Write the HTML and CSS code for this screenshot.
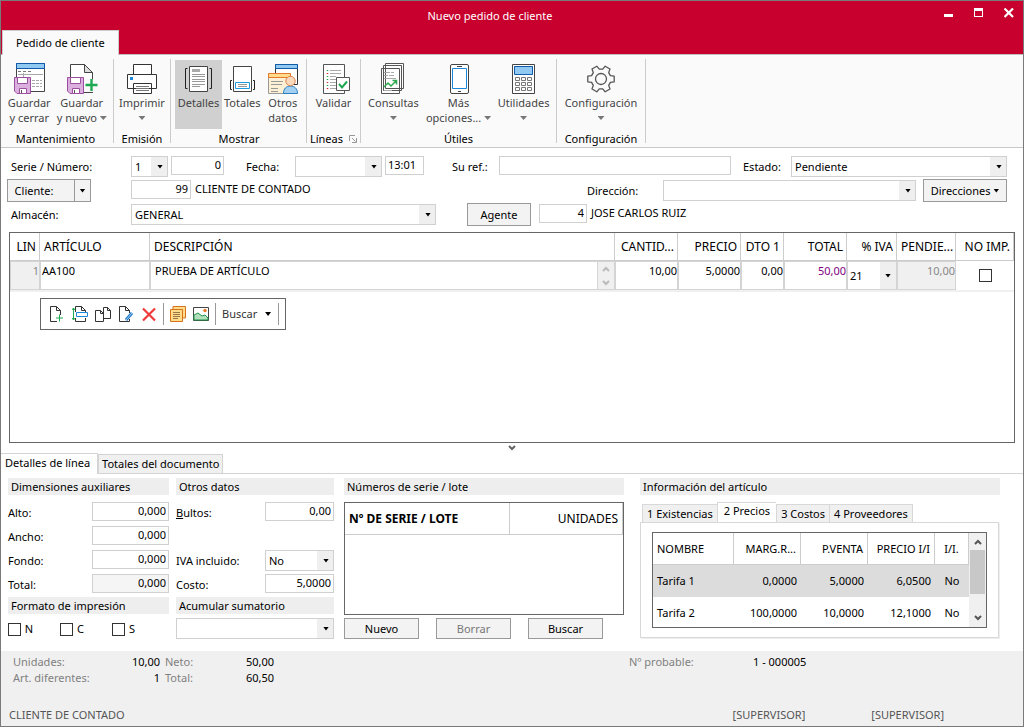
FILE: index.html
```html
<!DOCTYPE html>
<html lang="es">
<head>
<meta charset="utf-8">
<meta name="viewport" content="width=device-width, initial-scale=1">
<title>Nuevo pedido de cliente</title>
<link rel="stylesheet" href="styles.css">
</head>
<body class="window">

<header class="titlebar">
  <div class="title-row">
    <h1 class="title">Nuevo pedido de cliente</h1>
    <div class="window-buttons">
      <button class="win-btn" aria-label="Minimizar"><svg width="10" height="10" viewBox="0 0 10 10"><path d="M0 6h9v3H0z" fill="#fff"/></svg></button>
      <button class="win-btn" aria-label="Maximizar"><svg width="10" height="10" viewBox="0 0 10 10"><path d="M0 0h9v9H0zM1 3v5h7V3z" fill="#fff" fill-rule="evenodd"/></svg></button>
      <button class="win-btn" aria-label="Cerrar"><svg width="10" height="10" viewBox="0 0 10 10"><path d="M.5.500l8.500 8.500M9 .5l-8.500 8.500" stroke="#fff" stroke-width="2.200"/></svg></button>
    </div>
  </div>
  <button class="ribbon-tab">Pedido de cliente</button>
</header>

<nav class="ribbon" aria-label="Cinta de opciones">
  <section class="group g-save">
    <div class="group-buttons">
      <button class="tool">
        <svg class="icon" viewBox="0 0 32 32" fill="none"><path d="M3.500 1.500h28v28h-28z" fill="#fff" stroke="#444"/><path d="M3.500 1.500h28v5h-28z" fill="#91c9f2" stroke="#0f5ba8"/><path d="M5 9.500h3m2 0h3m2 0h3" stroke="#777"/><path d="M5 12.500h25M10.500 11v4M19 18.500h3m1 0h3m1 0h2M19 21.500h3m1 0h3m1 0h2M19 24.500h3m1 0h3m1 0h2" stroke="#a8a8a8"/><path d="M1.500 15.500h16v16H4l-2.500-2.500z" fill="#dcb0de" stroke="#9c4f9f"/><path d="M4.500 15.500h10v6h-10zM6.500 26.500h7v5h-7z" fill="#fff" stroke="#9c4f9f"/><path d="M8.500 28v3" stroke="#555"/></svg>
        <span>Guardar<br>y cerrar</span>
      </button>
      <button class="tool">
        <svg class="icon" viewBox="0 0 32 32" fill="none"><path d="M4.500 30.500v-28h14l8 8v20z" fill="#fff" stroke="#444"/><path d="M18.500 2.500v8h8z" fill="#ddd" stroke="#444"/><path d="M18 17h14v13H18z" fill="#fafafa"/><path d="M18 30.500h9" stroke="#444"/><path d="M25.500 17v12M19.500 23h12" stroke="#1ea851" stroke-width="2.400"/><path d="M1.500 15.500h16v16H4l-2.500-2.500z" fill="#dcb0de" stroke="#9c4f9f"/><path d="M4.500 15.500h10v6h-10zM6.500 26.500h7v5h-7z" fill="#fff" stroke="#9c4f9f"/><path d="M8.500 28v3" stroke="#555"/></svg>
        <span>Guardar<br>y nuevo <i class="caret"></i></span>
      </button>
    </div>
    <h2 class="group-name">Mantenimiento</h2>
  </section>

  <section class="group g-print">
    <div class="group-buttons">
      <button class="tool">
        <svg class="icon" viewBox="0 0 32 32" fill="#fff" stroke="#333"><path d="M7.500 12V2.500h18V12M1.500 12.500h29v14h-29zM7.500 21.500h18v10h-18z"/><path d="M10 24.500h13M10 26.500h13M10 28.500h13" stroke="#777"/><path d="M4 15h3v3H4z" fill="#1e88d8" stroke="none"/></svg>
        <span>Imprimir<br><i class="caret"></i></span>
      </button>
    </div>
    <h2 class="group-name">Emisión</h2>
  </section>

  <section class="group g-show">
    <div class="group-buttons">
      <button class="tool is-active" aria-pressed="true">
        <svg class="icon" viewBox="0 0 32 32" fill="none"><path d="M6.500 4.500h18v25h-18z" fill="#fff" stroke="#444"/><path d="M9 7h8v3H9z" fill="#aaa"/><path d="M9 12.500h13M9 14.500h13M9 17.500h13M9 19.500h13M9 22.500h13M9 24.500h8" stroke="#999"/><path d="M4.500 6.500h-2v20h2M26.500 6.500h2v20h-2" stroke="#222"/></svg>
        <span>Detalles</span>
      </button>
      <button class="tool">
        <svg class="icon" viewBox="0 0 32 32" fill="none"><path d="M7.500 4.500h18v25h-18z" fill="#fff" stroke="#444"/><path d="M9.500 20.500h14v6h-14z" stroke="#1e9be0"/><path d="M12 22.500h9M12 24.500h9" stroke="#999"/><path d="M6 18.500H4.500v9H6M27 18.500h1.500v9H27" stroke="#222"/></svg>
        <span>Totales</span>
      </button>
      <button class="tool">
        <svg class="icon" viewBox="0 0 32 32" fill="none"><path d="M8.500 2.500h22v20h-22z" fill="#fff" stroke="#333"/><path d="M8.500 2.500h22v4h-22z" fill="#91c9f2" stroke="#0f5ba8"/><path d="M1.500 11.500h22v20h-22z" fill="#fdf0d5" stroke="#999"/><path d="M1.500 11.500h22v4h-22z" fill="#ffdc8c" stroke="#e8792b"/><path d="M4 19.500h12M4 22.500h11M4 26.500h7M4 29.500h7" stroke="#999"/><path d="M16.500 31.500c0-5 3-7.500 7-7.500s7 2.500 7 7.500z" fill="#a3cff0" stroke="#2a7fc0"/><circle cx="23.500" cy="19" r="4.700" fill="#fbd9bd" stroke="#d98450"/></svg>
        <span>Otros<br>datos</span>
      </button>
    </div>
    <h2 class="group-name">Mostrar</h2>
  </section>

  <section class="group g-lines">
    <div class="group-buttons">
      <button class="tool">
        <svg class="icon" viewBox="0 0 32 32" fill="none"><path d="M5.500 2.500h21v29h-21z" fill="#fff" stroke="#555"/><path d="M12 8.500h11M12 11.500h11M12 14.500h6M12 17.500h6M12 20.500h6M12 23.500h6M12 26.500h9" stroke="#aaa"/><path d="M9.500 8v1m0 5v1m0 2v1m0 5v1" stroke="#1ea851" stroke-width="1.500"/><path d="M9.500 11v1m0 8v1m0 5v1" stroke="#d22" stroke-width="1.500"/><path d="M18.500 15.500h13v13h-13z" fill="#fff" stroke="#555"/><path d="M21 22l3 3.500 5-6" stroke="#1ea851" stroke-width="2"/></svg>
        <span>Validar</span>
      </button>
    </div>
    <div class="group-foot">
      <h2 class="group-name">Líneas</h2>
      <button class="launcher" aria-label="Opciones de líneas"><svg width="8" height="8" viewBox="0 0 8 8" fill="none" stroke="#999"><path d="M.5 6V.5H6M3 3l3.500 3.500M7.500 3v4.500H3"/></svg></button>
    </div>
  </section>

  <section class="group g-utils">
    <div class="group-buttons">
      <button class="tool">
        <svg class="icon" viewBox="0 0 32 32" fill="#fff" stroke="#555"><path d="M8.500 1.500h18v25h-18zM6.500 3.500h18v25h-18zM4.500 6.500h18v25h-18z"/><path d="M7 10.500h6m1 0h3M7 13.500h4m1 0h5M7 16.500h12" stroke="#aaa"/><path d="M7 25l4-4 3 3 5-5M15.500 18.500h4v4" fill="none" stroke="#2fa84f" stroke-width="1.500"/><path d="M7 28.500h8" stroke="#aaa"/></svg>
        <span>Consultas<br><i class="caret"></i></span>
      </button>
      <button class="tool">
        <svg class="icon" viewBox="0 0 32 32" fill="#fff" stroke="#444"><rect x="7.500" y="2.500" width="18" height="29" rx="1.500"/><path d="M9.500 6.500h14v20h-14z" stroke="#1e88d8"/><path d="M14 4.500h5M15 29.500h3"/></svg>
        <span>Más<br>opciones... <i class="caret"></i></span>
      </button>
      <button class="tool">
        <svg class="icon" viewBox="0 0 32 32" fill="#fff" stroke="#444"><path d="M4.500 2.500h22v29h-22z"/><path d="M6.500 4.500h18v8h-18z" fill="#91c9f2" stroke="#0f5ba8"/><path d="M7.500 15.500h4v3h-4zM13.500 15.500h4v3h-4zM19.500 15.500h4v3h-4zM7.500 20.500h4v3h-4zM13.500 20.500h4v3h-4zM19.500 20.500h4v3h-4zM7.500 25.500h4v3h-4zM13.500 25.500h4v3h-4zM19.500 25.500h4v3h-4z" stroke="#777"/></svg>
        <span>Utilidades<br><i class="caret"></i></span>
      </button>
    </div>
    <h2 class="group-name">Útiles</h2>
  </section>

  <section class="group g-config">
    <div class="group-buttons">
      <button class="tool">
        <svg class="icon" viewBox="0 0 32 32" fill="none" stroke="#555" stroke-width="1.300" stroke-linejoin="round"><path d="M25.400 20.400l3.800-.6v-5.600l-3.800-.6-1.700-3L25 7l-4.800-2.800-2.500 3h-3.400l-2.500-3L7 7l1.300 3.600-1.700 3-3.800.6v5.600l3.800.6 1.700 3L7 27l4.800 2.800 2.500-3h3.400l2.500 3L25 27l-1.300-3.600z"/><circle cx="16" cy="17" r="5.500"/></svg>
        <span>Configuración<br><i class="caret"></i></span>
      </button>
    </div>
    <h2 class="group-name">Configuración</h2>
  </section>
</nav>

<main class="content">
<form class="order" onsubmit="return false">
  <div class="form-row">
    <label class="lead" for="serie">Serie / Número:</label>
    <span class="select w-serie"><select id="serie"><option>1</option></select></span>
    <input class="num w-numero" aria-label="Número" value="0">
    <label class="l-fecha" for="fecha">Fecha:</label>
    <span class="select w-fecha"><select id="fecha"><option></option></select></span>
    <input class="w-hora" aria-label="Hora" value="13:01">
    <label class="l-ref" for="ref">Su ref.:</label>
    <input class="w-ref" id="ref">
    <label class="l-estado" for="estado">Estado:</label>
    <span class="select w-estado"><select id="estado"><option>Pendiente</option></select></span>
  </div>
  <div class="form-row">
    <div class="lead-btn"><button class="btn split-main">Cliente:</button><button class="btn split-arrow" aria-label="Opciones de cliente"><i class="caret dark"></i></button></div>
    <input class="num w-cliente" aria-label="Código de cliente" value="99">
    <output class="name">CLIENTE DE CONTADO</output>
    <label class="l-direccion" for="direccion">Dirección:</label>
    <span class="select w-direccion"><select id="direccion"><option></option></select></span>
    <button class="btn w-direcciones">Direcciones <i class="caret dark"></i></button>
  </div>
  <div class="form-row">
    <label class="lead" for="almacen">Almacén:</label>
    <span class="select w-almacen"><select id="almacen"><option>GENERAL</option></select></span>
    <button class="btn w-agente">Agente</button>
    <input class="num w-agente-num" aria-label="Código de agente" value="4">
    <output class="name">JOSE CARLOS RUIZ</output>
  </div>
</form>

<section class="lines" aria-label="Líneas del pedido">
  <table class="grid">
    <colgroup><col class="c-lin"><col class="c-art"><col><col class="c-63"><col class="c-63"><col class="c-dto"><col class="c-63"><col class="c-iva"><col class="c-pend"><col class="c-imp"></colgroup>
    <thead><tr><th class="r">LIN</th><th>ARTÍCULO</th><th>DESCRIPCIÓN</th><th class="r">CANTID...</th><th class="r">PRECIO</th><th class="r">DTO 1</th><th class="r">TOTAL</th><th class="r">% IVA</th><th class="r">PENDIE...</th><th class="r">NO IMP.</th></tr></thead>
    <tbody><tr>
      <td class="r muted">1</td><td>AA100</td>
      <td class="desc"><div class="desc-in"><span>PRUEBA DE ARTÍCULO</span><span class="spin"><svg width="8" height="22" viewBox="0 0 8 22" fill="none" stroke="#bbb" stroke-width="2"><path d="M1 6l3-3 3 3M1 16l3 3 3-3"/></svg></span></div></td>
      <td class="r">10,00</td><td class="r">5,0000</td><td class="r">0,00</td><td class="r total">50,00</td>
      <td class="iva"><span class="select bare"><select aria-label="% IVA"><option>21</option></select></span></td>
      <td class="r muted">10,00</td><td class="c"><input type="checkbox" aria-label="No imprimir"></td>
    </tr></tbody>
  </table>
  <div class="toolbar" role="toolbar" aria-label="Acciones de línea">
    <button class="tb" aria-label="Nueva línea"><svg viewBox="0 0 16 16" fill="#fff" stroke="#333"><path d="M8 15.500H1.500V.5h6l4 4V9M7.500.5v4h4"/><path d="M10.500 8.500v7M7 12h7" stroke="#1ea851"/></svg></button>
    <button class="tb" aria-label="Insertar línea"><svg viewBox="0 0 16 16" fill="#fff" stroke="#333"><path d="M3.500 6V.5h6l4 4V6M9.500.5v4h4M3.500 12v3.500h10V12"/><path d="M4.500 6.500h11v4h-11z" stroke="#1e88d8"/><path d="M1.500 2v12M0 4l1.500-2L3 4M0 12l1.500 2L3 12" fill="none" stroke="#1ea851"/></svg></button>
    <button class="tb" aria-label="Duplicar línea"><svg viewBox="0 0 16 16" fill="#fff" stroke="#333"><path d="M8.500 1.500h4l3 3v8h-7zM12.500 1.500v3h3M.5 4.500h5l3 3v8h-8zM5.500 4.500v3h3"/></svg></button>
    <button class="tb" aria-label="Editar línea"><svg viewBox="0 0 16 16" fill="#fff" stroke="#333"><path d="M11.500 13v2.500h-10V.5h6l4 4V7M7.500.5v4h4"/><path d="M8 14l6-7" stroke="#1e78c8" stroke-width="3"/><path d="M8 14l6-7" stroke="#9fd0f5"/></svg></button>
    <button class="tb" aria-label="Borrar línea"><svg viewBox="0 0 16 16" fill="none" stroke="#ee3a3a" stroke-width="2.200"><path d="M2 2.500l12 12M14 2.500l-12 12"/></svg></button>
    <span class="sep"></span>
    <button class="tb" aria-label="Notas"><svg viewBox="0 0 16 16" fill="#ffdc8c" stroke="#d9731a"><path d="M3 .5h12.500V12H3z"/><path d="M.5 3.500h12v12H.5z"/><path d="M3 6.500h7M3 8.500h7M3 10.500h7M3 12.500h5" stroke="#997744"/></svg></button>
    <button class="tb" aria-label="Imagen"><svg viewBox="0 0 16 16"><path d="M.5 1.500h15v13H.5z" fill="#fff" stroke="#444"/><path d="M1 9l4-2 4 3 3-1 3 3v2H1z" fill="#b2e0bd" stroke="#1e9448"/><circle cx="12" cy="4.500" r="1.700" fill="#e87722"/></svg></button>
    <span class="sep"></span>
    <button class="tb-text">Buscar <i class="caret dark"></i></button>
    <span class="sep"></span>
  </div>
</section>
<button class="collapse" aria-label="Ocultar detalles"><svg width="8" height="6" viewBox="0 0 8 6" fill="none" stroke="#666" stroke-width="2"><path d="M1 1l3 3 3-3"/></svg></button>

<div class="tabs" role="tablist">
  <button class="tab is-selected" role="tab" aria-selected="true">Detalles de línea</button>
  <button class="tab" role="tab" aria-selected="false">Totales del documento</button>
</div>

<div class="details">
  <section class="col-dim">
    <h3 class="head">Dimensiones auxiliares</h3>
    <div class="fields">
      <div class="field"><label for="alto">Alto:</label><input class="num w-dim" id="alto" value="0,000"></div>
      <div class="field"><label for="ancho">Ancho:</label><input class="num w-dim" id="ancho" value="0,000"></div>
      <div class="field"><label for="fondo">Fondo:</label><input class="num w-dim" id="fondo" value="0,000"></div>
      <div class="field"><label for="total">Total:</label><input class="num w-dim" id="total" value="0,000" readonly></div>
    </div>
    <h3 class="head">Formato de impresión</h3>
    <div class="checks">
      <label><input type="checkbox">N</label>
      <label><input type="checkbox">C</label>
      <label><input type="checkbox">S</label>
    </div>
  </section>
  <section class="col-other">
    <h3 class="head">Otros datos</h3>
    <div class="fields">
      <div class="field"><label for="bultos"><u>B</u>ultos:</label><input class="num w-other" id="bultos" value="0,00"></div>
      <div class="field"></div>
      <div class="field"><label for="ivainc">IVA incluido:</label><span class="select w-other"><select id="ivainc"><option>No</option></select></span></div>
      <div class="field"><label for="costo">Costo:</label><input class="num w-other" id="costo" value="5,0000"></div>
    </div>
    <h3 class="head">Acumular sumatorio</h3>
    <span class="select w-sum"><select aria-label="Acumular sumatorio"><option></option></select></span>
  </section>
  <section class="col-serial">
    <h3 class="head">Números de serie / lote</h3>
    <div class="serial-box">
      <table class="grid serial"><thead><tr><th class="strong">Nº DE SERIE / LOTE</th><th class="r c-units">UNIDADES</th></tr></thead></table>
    </div>
    <div class="serial-buttons"><button class="btn">Nuevo</button><button class="btn" disabled>Borrar</button><button class="btn">Buscar</button></div>
  </section>
  <section class="col-info">
    <h3 class="head">Información del artículo</h3>
    <div class="info-tabs" role="tablist">
      <button class="itab" role="tab">1 Existencias</button><button class="itab is-selected" role="tab" aria-selected="true">2 Precios</button><button class="itab" role="tab">3 Costos</button><button class="itab" role="tab">4 Proveedores</button>
    </div>
    <div class="info-panel">
      <div class="price-box">
        <table class="grid prices">
          <colgroup><col><col class="c-67"><col class="c-67"><col class="c-67"><col class="c-ii"></colgroup>
          <thead><tr><th>NOMBRE</th><th class="r">MARG.R...</th><th class="r">P.VENTA</th><th class="r">PRECIO I/I</th><th class="c">I/I.</th></tr></thead>
          <tbody>
            <tr class="is-selected"><td>Tarifa 1</td><td class="r">0,0000</td><td class="r">5,0000</td><td class="r">6,0500</td><td class="c">No</td></tr>
            <tr><td>Tarifa 2</td><td class="r">100,0000</td><td class="r">10,0000</td><td class="r">12,1000</td><td class="c">No</td></tr>
          </tbody>
        </table>
        <div class="scroll">
          <svg width="8" height="6" viewBox="0 0 8 6" fill="none" stroke="#555" stroke-width="2"><path d="M1 5l3-3 3 3"/></svg>
          <div class="thumb"></div>
          <svg width="8" height="6" viewBox="0 0 8 6" fill="none" stroke="#555" stroke-width="2"><path d="M1 1l3 3 3-3"/></svg>
        </div>
      </div>
    </div>
  </section>
</div>
</main>

<footer class="footer">
  <div class="summary">
    <span class="k">Unidades:</span><span class="v">10,00</span><span class="k k2">Neto:</span><span class="v">50,00</span><span class="k prob">Nº probable:</span><span>1 - 000005</span>
    <span class="k">Art. diferentes:</span><span class="v">1</span><span class="k k2">Total:</span><span class="v">60,50</span>
  </div>
  <div class="status"><span class="who">CLIENTE DE CONTADO</span><span class="user">[SUPERVISOR]</span><span class="user">[SUPERVISOR]</span></div>
</footer>
</body>
</html>
```

FILE: styles.css
```css
* { box-sizing: border-box; }

.window {
  margin: 0;
  min-height: 100vh;
  display: flex;
  flex-direction: column;
  border: 1px solid #7a7a7a;
  background: #fff;
  color: #000;
  font: 11px/16px "Noto Sans", "Open Sans", sans-serif;
}
button, input, select { font: inherit; color: inherit; margin: 0; border-radius: 0; }
button { padding: 0; border: 0; background: none; }
h1, h2, h3 { margin: 0; font: inherit; }

/* Title bar */
.titlebar { position: relative; background: #c8002d; color: #fff; }
.title-row { display: flex; height: 29px; padding: 0 9px 0 35px; }
.title { flex: 1; line-height: 30px; text-align: center; }
.window-buttons { display: flex; gap: 20px; padding-top: 7px; }
.win-btn { width: 10px; height: 10px; display: flex; }
.ribbon-tab {
  display: block;
  height: 25px;
  margin-left: 1px;
  margin-bottom: -1px;
  padding: 0 13px;
  background: #fafafa;
  border: 1px solid #ccc;
  border-bottom: 0;
  color: #000;
}

/* Ribbon */
.ribbon {
  display: flex;
  height: 94px;
  padding: 4px 0;
  border-top: 1px solid #c0c0c0;
  border-bottom: 1px solid #c8c8c8;
  background: #fafafa;
}
.group { display: flex; flex-direction: column; border-right: 1px solid #ccc; }
.group-buttons { display: flex; flex: none; justify-content: center; height: 73px; padding-top: 1px; }
.group-name { text-align: center; line-height: 14px; }
.group-foot { display: flex; justify-content: center; align-items: center; gap: 6px; }
.launcher { display: flex; }
.tool {
  flex: 1;
  display: flex;
  flex-direction: column;
  align-items: center;
  height: 69px;
  padding-top: 2px;
  color: #444;
  line-height: 15px;
  white-space: nowrap;
}
.tool.is-active { background: #d0d0d0; }
.icon { width: 32px; height: 32px; margin-bottom: 1px; flex: none; }
.g-save { width: 113px; padding: 0 5px 0 2px; }
.g-print { width: 57px; }
.g-show { width: 136px; padding: 0 3px 0 4px; }
.g-show .is-active { flex: none; width: 47px; }
.g-lines { width: 54px; }
.g-utils { width: 196px; }
.g-config { width: 89px; }
.caret {
  display: inline-block;
  width: 7px;
  height: 4px;
  margin-left: 1px;
  vertical-align: 1px;
  background: #777;
  clip-path: polygon(0 0, 100% 0, 50% 100%);
}
br + .caret { margin-left: 0; vertical-align: 2px; }
.caret.dark { background: #000; }

/* Controls */
input, select {
  height: 19px;
  padding: 0 2px;
  border: 1px solid #d0d0d0;
  background: #fff;
  outline: 0;
}
input { min-width: 0; padding-bottom: 2px; }
input[readonly] { background: #f5f5f5; }
.num { text-align: right; }
.form-row input, .field input { margin-bottom: 2px; }
.select { display: grid; height: 21px; }
.select select {
  grid-area: 1 / 1;
  width: 100%;
  height: 100%;
  min-width: 0;
  padding: 0 20px 0 3px;
  appearance: none;
}
.select::before, .select::after { content: ""; grid-area: 1 / 1; z-index: 1; justify-self: end; align-self: center; pointer-events: none; }
.select::before { width: 16px; height: 19px; margin-right: 1px; background: #efefef; }
.select::after { width: 6px; height: 4px; margin-right: 5px; background: #000; clip-path: polygon(0 0, 100% 0, 50% 100%); }
input[type="checkbox"] {
  appearance: none;
  width: 13px;
  height: 13px;
  margin: 0;
  padding: 0;
  border-color: #333;
}
.btn { height: 23px; border: 1px solid #999; background: #f3f3f3; }
.btn:disabled { color: #777; }

/* Order form */
.order { display: flex; flex-direction: column; gap: 1px; padding: 7px 16px 6px 6px; }
.form-row { display: flex; align-items: center; height: 23px; }
.form-row > label { white-space: nowrap; }
.lead { width: 120px; margin-right: 4px; padding-left: 4px; }
.form-row > .lead { flex: none; }
.lead-btn { display: flex; flex: none; width: 124px; }
.split-main { width: 68px; padding-right: 14px; }
.split-arrow { width: 17px; margin-left: -1px; }
.btn .caret { margin: 0; width: 6px; vertical-align: 2px; }
.w-serie { width: 37px; margin-right: 3px; }
.w-numero { width: 53px; }
.l-fecha { width: 71px; padding-left: 22px; }
.w-fecha { width: 87px; margin-right: 3px; }
.w-hora { width: 39px; }
.l-ref { width: 75px; padding-left: 28px; }
.w-ref { flex: 1; }
.l-estado { width: 60px; padding-left: 12px; }
.w-estado { width: 216px; }
.w-cliente { width: 60px; }
.name { padding: 0 0 3px 4px; }
.l-direccion { width: 76px; margin-left: auto; }
.w-direccion { width: 253px; margin-right: 7px; }
.w-direcciones { width: 84px; white-space: nowrap; }
.w-almacen { width: 305px; margin-right: 31px; }
.w-agente { width: 64px; margin-right: 8px; }
.w-agente-num { width: 48px; }

/* Tables */
.grid { border-collapse: separate; border-spacing: 0; table-layout: fixed; width: 100%; }
.grid th { padding: 0 4px; border-right: 1px solid #ccc; border-bottom: 1px solid #ccc; font-weight: 400; text-align: left; white-space: nowrap; }
.grid td { padding: 0 4px; }
.grid .r { text-align: right; }
.grid .c { text-align: center; }
.lines { flex: none; height: 211px; margin: 0 8px; border: 1px solid #666; }
.lines th { height: 28px; padding: 0 3px 0 4px; font-size: 12px; }
.lines td { height: 29px; padding: 1px 0 0 1px; border: 1px solid #d4d4d4; vertical-align: top; }
.lines tbody { box-shadow: 0 2px #f0f0f0; }
.lines td.muted { color: #888; background: #f0f0f0; }
.lines td.total { color: #800080; }
.lines td:last-child { border-color: transparent; vertical-align: middle; padding: 0; }
.lines td:last-child input { display: block; margin: 0 auto; }
.lines .desc, .lines .iva { padding: 0; }
.desc-in { display: flex; justify-content: space-between; padding: 1px 0 0 4px; height: 27px; }
.spin { margin-top: -1px; width: 17px; background: #f0f0f0; border-left: 1px solid #d4d4d4; display: flex; align-items: center; justify-content: center; }
.bare { height: 27px; }
.bare select { padding-left: 2px; border: 0; }
.bare::before { height: 27px; margin: 0; }
.c-lin { width: 30px; } .c-art { width: 110px; } .c-63 { width: 63px; } .c-dto { width: 43px; }
.c-iva { width: 50px; } .c-pend { width: 59px; } .c-imp { width: 58px; }

.toolbar {
  display: inline-flex;
  align-items: center;
  gap: 7px;
  height: 32px;
  margin: 8px 30px;
  padding: 0 7px 0 8px;
  border: 1px solid #666;
}
.tb { width: 16px; height: 16px; }
.tb svg { display: block; width: 16px; height: 16px; }
.tb-text { color: #333; white-space: nowrap; }
.tb-text .caret { width: 6px; margin-left: 5px; vertical-align: 2px; }
.sep { width: 1px; height: 22px; margin: 0 -1px; background: #999; }
.tb-text + .sep { margin-left: 0; }
.collapse { display: flex; justify-content: center; width: 100%; height: 10px; padding-top: 2px; }

/* Detail tabs */
.tabs { display: flex; align-items: flex-end; height: 21px; border-bottom: 1px solid #d4d4d4; }
.tab { height: 19px; padding: 0 3px; border: 1px solid #d4d4d4; border-bottom: 0; background: #f0f0f0; white-space: nowrap; }
.tab.is-selected { height: 21px; margin-bottom: -1px; padding: 0 7px 3px 4px; border-left: 0; background: #fff; }

.details { display: grid; grid-template-columns: 161px 158px 280px minmax(358px, 1fr); column-gap: 7px; padding: 4px 23px 7px 7px; }
.head { height: 17px; padding-left: 3px; line-height: 17px; background: #eee; }
.fields { display: flex; flex-direction: column; gap: 3px; padding: 7px 0 2px; }
.field { display: flex; justify-content: space-between; align-items: center; height: 21px; }
.w-dim { width: 77px; }
.w-other { width: 69px; }
.w-sum { margin-top: 4px; }
.checks { display: flex; gap: 27px; padding: 7px 0; }
.checks label { display: flex; align-items: center; gap: 4px; width: 25px; }
.col-serial { margin-left: 3px; width: 280px; }
.serial-box { height: 113px; margin: 7px 0 3px; border: 1px solid #666; }
.serial th { height: 32px; font-size: 12px; }
.grid .strong { font-weight: 700; }
.c-units { width: 113px; }
.serial-buttons { display: flex; gap: 17px; }
.serial-buttons .btn { width: 75px; height: 21px; }
.col-info { padding-left: 12px; }
.info-tabs { display: flex; align-items: flex-end; height: 27px; padding: 7px 0 0 2px; }
.itab { height: 18px; padding: 0 4px; border: 1px solid #d8d8d8; border-bottom: 0; border-right: 0; background: #f0f0f0; white-space: nowrap; }
.itab:last-child { border-right: 1px solid #d8d8d8; }
.itab.is-selected { height: 20px; padding: 0 6px 3px; background: #fff; }
.info-panel { margin-right: 1px; padding: 9px 11px; border: 1px solid #d8d8d8; box-shadow: 1px 1px #eee; }
.price-box { display: flex; height: 96px; overflow: hidden; border: 1px solid #666; }
.prices th, .prices td { height: 32px; }
.c-67 { width: 67px; } .c-ii { width: 34px; }
.prices tr.is-selected { background: #dcdcdc; }
.scroll { flex: none; width: 17px; display: flex; flex-direction: column; align-items: center; padding: 6px 1px; background: #f0f0f0; }
.scroll svg { flex: none; }
.thumb { width: 100%; height: 44px; margin: 5px 0 auto; background: #c8c8c8; }

/* Footer */
.footer { flex: 1; display: flex; flex-direction: column; justify-content: space-between; padding: 3px 0; background: #f0f0f0; }
.summary { display: grid; grid-template-columns: 90px 57px 55px 59px 1fr 124px 270px; padding-left: 12px; }
.k { color: #808080; }
.v { text-align: right; }
.k2 { padding-left: 5px; }
.prob { grid-column: 6; }
.status { display: flex; padding: 0 79px 0 8px; color: #555; gap: 66px; }
.who { flex: 1; }
```
